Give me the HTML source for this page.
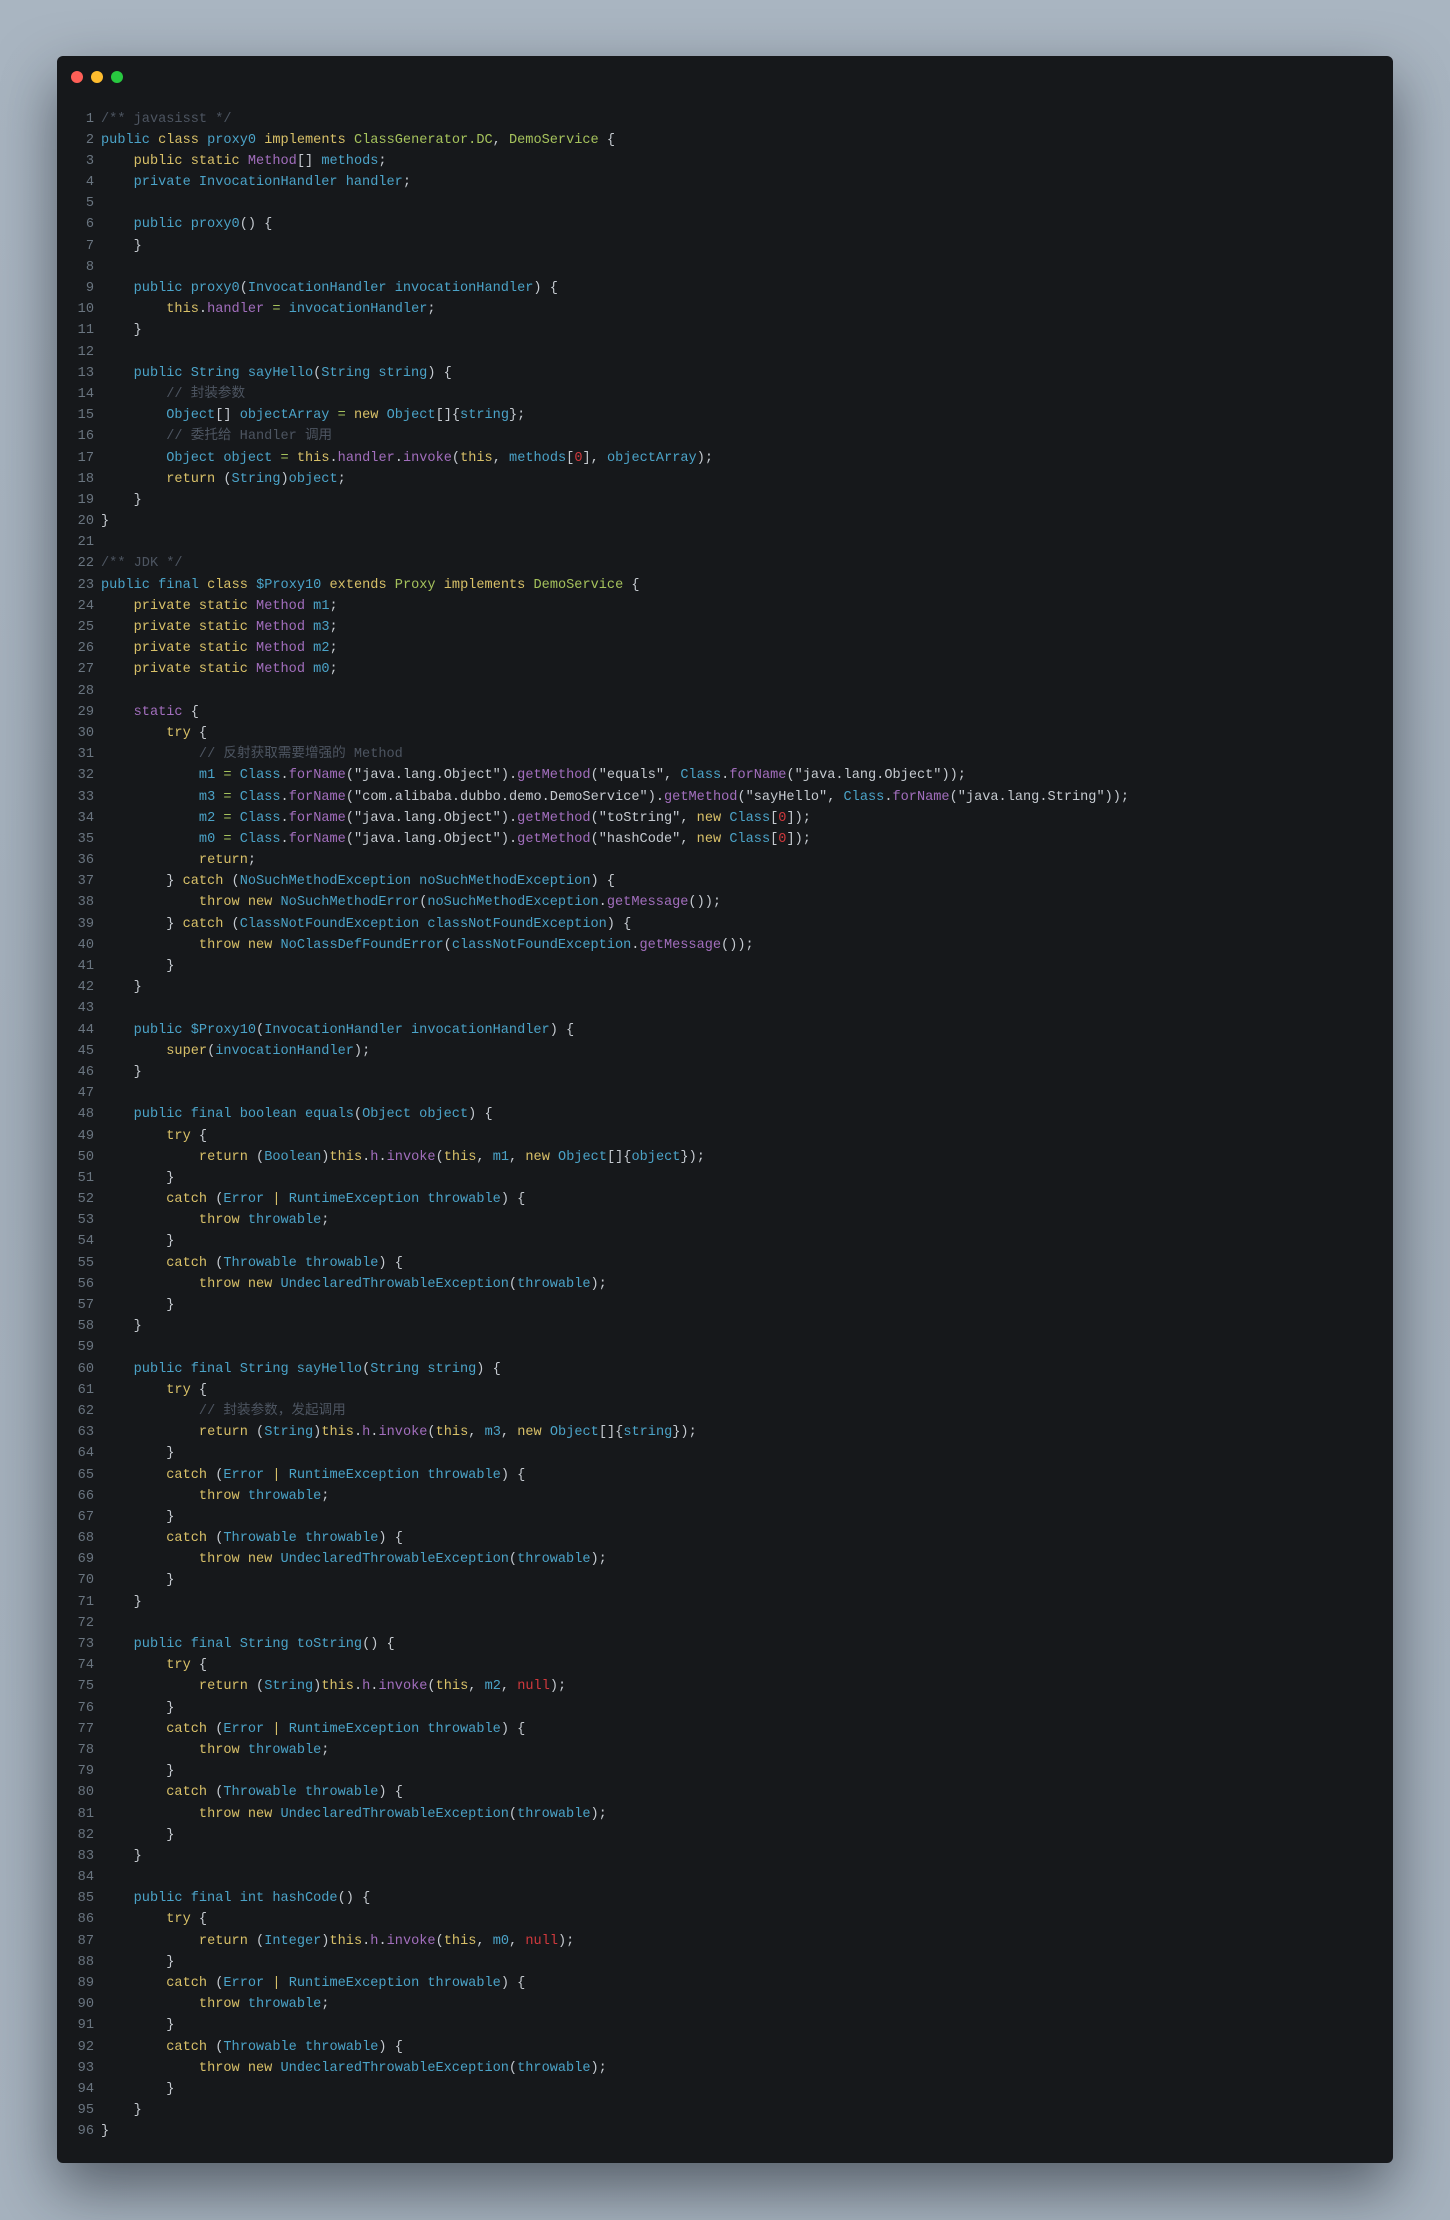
<!DOCTYPE html>
<html><head><meta charset="utf-8"><style>
html,body{margin:0;padding:0}
body{width:1450px;height:2220px;background:linear-gradient(180deg,#a9b5c1 0%,#a3afbb 50%,#a6b2be 100%);position:relative;overflow:hidden;font-family:"Liberation Mono","Noto Sans CJK SC",monospace}
.win{position:absolute;left:57px;top:56px;width:1336px;height:2107px;background:#16181b;border-radius:6px;box-shadow:0 25px 60px rgba(20,25,35,.55)}
.dot{position:absolute;top:71px;width:12px;height:12px;border-radius:50%}
pre{margin:0;position:absolute;top:108.5px;font-size:13.6px;line-height:21.18px;font-family:"Liberation Mono","Noto Sans CJK SC",monospace;white-space:pre}
.ln{left:57px;width:37px;text-align:right;color:#6a7580}
.code{left:101px;color:#c5cad0}
.k{color:#d8c068}.b{color:#4ba3c8}.p{color:#a26ebd}.g{color:#a5c25c}.c{color:#4d5561}.n{color:#d0393d}.s{color:#c5cad0}
</style></head><body>
<div class="win"></div>
<div class="dot" style="left:71px;background:#fe5f57"></div>
<div class="dot" style="left:91px;background:#febc2e"></div>
<div class="dot" style="left:111px;background:#28c840"></div>
<pre class="ln">1
2
3
4
5
6
7
8
9
10
11
12
13
14
15
16
17
18
19
20
21
22
23
24
25
26
27
28
29
30
31
32
33
34
35
36
37
38
39
40
41
42
43
44
45
46
47
48
49
50
51
52
53
54
55
56
57
58
59
60
61
62
63
64
65
66
67
68
69
70
71
72
73
74
75
76
77
78
79
80
81
82
83
84
85
86
87
88
89
90
91
92
93
94
95
96</pre>
<pre class="code"><span class="c">/** javasisst */</span>
<span class="b">public</span> <span class="k">class</span> <span class="b">proxy0</span> <span class="k">implements</span> <span class="g">ClassGenerator.DC</span>, <span class="g">DemoService</span> {
    <span class="k">public static</span> <span class="p">Method</span>[] <span class="b">methods</span>;
    <span class="b">private InvocationHandler handler</span>;

    <span class="b">public proxy0</span>() {
    }

    <span class="b">public proxy0</span>(<span class="b">InvocationHandler invocationHandler</span>) {
        <span class="k">this</span>.<span class="p">handler</span> <span class="g">=</span> <span class="b">invocationHandler</span>;
    }

    <span class="b">public String sayHello</span>(<span class="b">String string</span>) {
        <span class="c">// 封装参数</span>
        <span class="b">Object</span>[] <span class="b">objectArray</span> <span class="g">=</span> <span class="k">new</span> <span class="b">Object</span>[]{<span class="b">string</span>};
        <span class="c">// 委托给 Handler 调用</span>
        <span class="b">Object object</span> <span class="g">=</span> <span class="k">this</span>.<span class="p">handler</span>.<span class="p">invoke</span>(<span class="k">this</span>, <span class="b">methods</span>[<span class="n">0</span>], <span class="b">objectArray</span>);
        <span class="k">return</span> (<span class="b">String</span>)<span class="b">object</span>;
    }
}

<span class="c">/** JDK */</span>
<span class="b">public</span> <span class="b">final</span> <span class="k">class</span> <span class="b">$Proxy10</span> <span class="k">extends</span> <span class="g">Proxy</span> <span class="k">implements</span> <span class="g">DemoService</span> {
    <span class="k">private static</span> <span class="p">Method</span> <span class="b">m1</span>;
    <span class="k">private static</span> <span class="p">Method</span> <span class="b">m3</span>;
    <span class="k">private static</span> <span class="p">Method</span> <span class="b">m2</span>;
    <span class="k">private static</span> <span class="p">Method</span> <span class="b">m0</span>;

    <span class="p">static</span> {
        <span class="k">try</span> {
            <span class="c">// 反射获取需要增强的 Method</span>
            <span class="b">m1</span> <span class="g">=</span> <span class="b">Class</span>.<span class="p">forName</span>(<span class="s">"java.lang.Object"</span>).<span class="p">getMethod</span>(<span class="s">"equals"</span>, <span class="b">Class</span>.<span class="p">forName</span>(<span class="s">"java.lang.Object"</span>));
            <span class="b">m3</span> <span class="g">=</span> <span class="b">Class</span>.<span class="p">forName</span>(<span class="s">"com.alibaba.dubbo.demo.DemoService"</span>).<span class="p">getMethod</span>(<span class="s">"sayHello"</span>, <span class="b">Class</span>.<span class="p">forName</span>(<span class="s">"java.lang.String"</span>));
            <span class="b">m2</span> <span class="g">=</span> <span class="b">Class</span>.<span class="p">forName</span>(<span class="s">"java.lang.Object"</span>).<span class="p">getMethod</span>(<span class="s">"toString"</span>, <span class="k">new</span> <span class="b">Class</span>[<span class="n">0</span>]);
            <span class="b">m0</span> <span class="g">=</span> <span class="b">Class</span>.<span class="p">forName</span>(<span class="s">"java.lang.Object"</span>).<span class="p">getMethod</span>(<span class="s">"hashCode"</span>, <span class="k">new</span> <span class="b">Class</span>[<span class="n">0</span>]);
            <span class="k">return</span>;
        } <span class="k">catch</span> (<span class="b">NoSuchMethodException noSuchMethodException</span>) {
            <span class="k">throw new</span> <span class="b">NoSuchMethodError</span>(<span class="b">noSuchMethodException</span>.<span class="p">getMessage</span>());
        } <span class="k">catch</span> (<span class="b">ClassNotFoundException classNotFoundException</span>) {
            <span class="k">throw new</span> <span class="b">NoClassDefFoundError</span>(<span class="b">classNotFoundException</span>.<span class="p">getMessage</span>());
        }
    }

    <span class="b">public $Proxy10</span>(<span class="b">InvocationHandler invocationHandler</span>) {
        <span class="k">super</span>(<span class="b">invocationHandler</span>);
    }

    <span class="b">public final boolean equals</span>(<span class="b">Object object</span>) {
        <span class="k">try</span> {
            <span class="k">return</span> (<span class="b">Boolean</span>)<span class="k">this</span>.<span class="p">h</span>.<span class="p">invoke</span>(<span class="k">this</span>, <span class="b">m1</span>, <span class="k">new</span> <span class="b">Object</span>[]{<span class="b">object</span>});
        }
        <span class="k">catch</span> (<span class="b">Error</span> <span class="k">|</span> <span class="b">RuntimeException throwable</span>) {
            <span class="k">throw</span> <span class="b">throwable</span>;
        }
        <span class="k">catch</span> (<span class="b">Throwable throwable</span>) {
            <span class="k">throw new</span> <span class="b">UndeclaredThrowableException</span>(<span class="b">throwable</span>);
        }
    }

    <span class="b">public final String sayHello</span>(<span class="b">String string</span>) {
        <span class="k">try</span> {
            <span class="c">// 封装参数，发起调用</span>
            <span class="k">return</span> (<span class="b">String</span>)<span class="k">this</span>.<span class="p">h</span>.<span class="p">invoke</span>(<span class="k">this</span>, <span class="b">m3</span>, <span class="k">new</span> <span class="b">Object</span>[]{<span class="b">string</span>});
        }
        <span class="k">catch</span> (<span class="b">Error</span> <span class="k">|</span> <span class="b">RuntimeException throwable</span>) {
            <span class="k">throw</span> <span class="b">throwable</span>;
        }
        <span class="k">catch</span> (<span class="b">Throwable throwable</span>) {
            <span class="k">throw new</span> <span class="b">UndeclaredThrowableException</span>(<span class="b">throwable</span>);
        }
    }

    <span class="b">public final String toString</span>() {
        <span class="k">try</span> {
            <span class="k">return</span> (<span class="b">String</span>)<span class="k">this</span>.<span class="p">h</span>.<span class="p">invoke</span>(<span class="k">this</span>, <span class="b">m2</span>, <span class="n">null</span>);
        }
        <span class="k">catch</span> (<span class="b">Error</span> <span class="k">|</span> <span class="b">RuntimeException throwable</span>) {
            <span class="k">throw</span> <span class="b">throwable</span>;
        }
        <span class="k">catch</span> (<span class="b">Throwable throwable</span>) {
            <span class="k">throw new</span> <span class="b">UndeclaredThrowableException</span>(<span class="b">throwable</span>);
        }
    }

    <span class="b">public final int hashCode</span>() {
        <span class="k">try</span> {
            <span class="k">return</span> (<span class="b">Integer</span>)<span class="k">this</span>.<span class="p">h</span>.<span class="p">invoke</span>(<span class="k">this</span>, <span class="b">m0</span>, <span class="n">null</span>);
        }
        <span class="k">catch</span> (<span class="b">Error</span> <span class="k">|</span> <span class="b">RuntimeException throwable</span>) {
            <span class="k">throw</span> <span class="b">throwable</span>;
        }
        <span class="k">catch</span> (<span class="b">Throwable throwable</span>) {
            <span class="k">throw new</span> <span class="b">UndeclaredThrowableException</span>(<span class="b">throwable</span>);
        }
    }
}</pre>
</body></html>
